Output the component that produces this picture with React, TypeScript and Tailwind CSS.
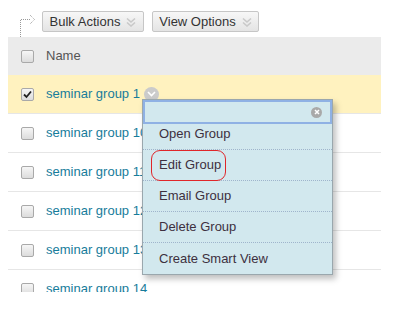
import React from "react";

const rows = [
  "seminar group 1",
  "seminar group 10",
  "seminar group 11",
  "seminar group 12",
  "seminar group 13",
  "seminar group 14",
];

const menuItems = ["Open Group", "Edit Group", "Email Group", "Delete Group", "Create Smart View"];

const DoubleChevron = () => (
  <svg width="10" height="10" viewBox="0 0 10 10" className="ml-[6px]">
    <path d="M1 1.5 L5 5 L9 1.5" fill="none" stroke="#c9c9c9" strokeWidth="1.6" />
    <path d="M1 5.5 L5 9 L9 5.5" fill="none" stroke="#c9c9c9" strokeWidth="1.6" />
  </svg>
);

const ToolButton = ({ label, width }: { label: string; width: string }) => (
  <button
    type="button"
    className={`${width} h-[21px] flex items-center justify-center rounded-[2px] border border-[#c6c6c6] bg-gradient-to-b from-[#f7f7f7] to-[#e4e4e4] text-[13px] text-[#333]`}
  >
    {label}
    <DoubleChevron />
  </button>
);

const Checkbox = ({ checked }: { checked?: boolean }) => (
  <span className="flex h-[13px] w-[13px] items-center justify-center rounded-[2px] border border-[#a9a9a9] bg-gradient-to-b from-[#f6f6f6] to-[#dcdcdc]">
    {checked && (
      <svg width="9" height="9" viewBox="0 0 9 9">
        <path d="M1 4.5 L3.5 7 L8 1.5" fill="none" stroke="#222" strokeWidth="1.8" />
      </svg>
    )}
  </span>
);

export default function App() {
  return (
    <div
      className="relative h-[309px] w-[396px] overflow-hidden bg-white"
      style={{ fontFamily: '"Liberation Sans", Arial, sans-serif' }}
    >
      {/* toolbar */}
      <div className="flex h-[37px] items-start pt-[11px]">
        <svg width="42" height="37" viewBox="0 0 42 37" className="-mt-[11px] shrink-0">
          <path d="M20.5 37 V19.5 H31" fill="none" stroke="#999" strokeDasharray="1 1" />
          <path d="M30 15 L34.5 19.5 L30 24" fill="none" stroke="#999" strokeDasharray="1 1" />
        </svg>
        <div className="flex gap-[8px]">
          <ToolButton label="Bulk Actions" width="w-[102px]" />
          <ToolButton label="View Options" width="w-[107px]" />
        </div>
      </div>

      {/* table */}
      <div className="ml-[8px] h-[255px] w-[373px] overflow-hidden text-[13px]">
        <div className="flex h-[38px] items-center bg-[#ebebeb]">
          <div className="flex w-[38px] justify-center pl-[1px]">
            <Checkbox />
          </div>
          <span className="text-[#555]">Name</span>
        </div>
        {rows.map((r, i) => (
          <div
            key={r}
            className={`flex h-[39px] items-center border-b border-[#e6e6e6] ${i === 0 ? "bg-[#fff2bf]" : "bg-white"}`}
          >
            <div className="flex w-[38px] justify-center pl-[1px]">
              <Checkbox checked={i === 0} />
            </div>
            <span className="text-[#177c9b]">{r}</span>
            {i === 0 && (
              <span className="ml-[4px] flex h-[15px] w-[15px] items-center justify-center rounded-full bg-[#cbcbcb]">
                <svg width="9" height="6" viewBox="0 0 9 6">
                  <path d="M1 1 L4.5 4.5 L8 1" fill="none" stroke="#fff" strokeWidth="1.6" />
                </svg>
              </span>
            )}
          </div>
        ))}
      </div>

      {/* context menu */}
      <div className="absolute left-[142px] top-[99px] w-[191px] border border-[#9aa7ad] bg-[#d2e8ee] text-[13px] text-[#3d3040] shadow-[3px_4px_6px_rgba(0,0,0,0.25)]">
        <div className="flex h-[24px] items-center justify-end border-2 border-[#8fb1e4] pr-[8px]">
          <span className="flex h-[11px] w-[11px] items-center justify-center rounded-full bg-[#a9a9a9]">
            <svg width="6" height="6" viewBox="0 0 6 6">
              <path d="M1 1 L5 5 M5 1 L1 5" stroke="#fff" strokeWidth="1.5" />
            </svg>
          </span>
        </div>
        {menuItems.map((m, i) => (
          <div
            key={m}
            className={`flex items-center pl-[16px] ${i === 0 ? "h-[26px] pb-[5px]" : "h-[31px]"} ${
              i < menuItems.length - 1 ? "border-b border-dotted border-[#9fb4cc]" : ""
            }`}
          >
            {i === 1 ? (
              <span className="-ml-[8px] flex h-[31px] w-[75px] items-center rounded-[9px] border border-[#e0262a] pl-[7px]">
                {m}
              </span>
            ) : (
              m
            )}
          </div>
        ))}
      </div>
    </div>
  );
}
